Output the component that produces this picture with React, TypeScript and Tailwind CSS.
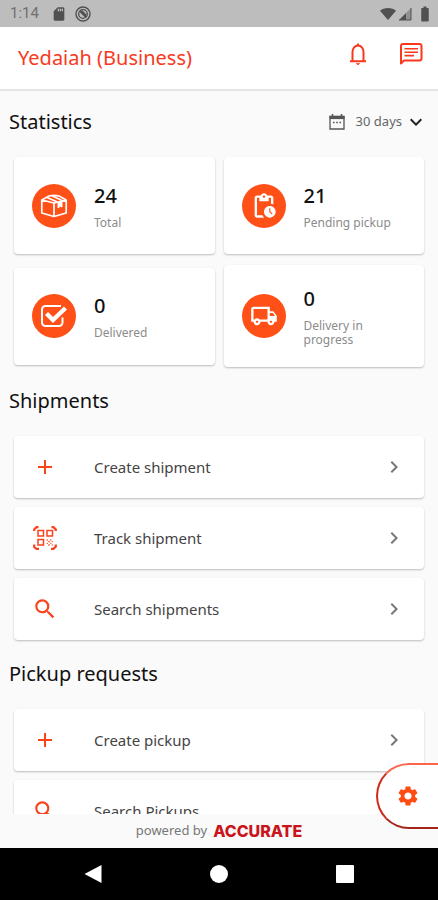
import type { ReactNode } from "react";
import {
  MdAdd,
  MdBatteryFull,
  MdChevronRight,
  MdKeyboardArrowDown,
  MdOutlineLocalShipping,
  MdOutlinePendingActions,
  MdSdCard,
  MdSearch,
  MdSettings,
} from "react-icons/md";

function BoxIcon() {
  return (
    <svg className="size-7" viewBox="0 0 28 28" fill="none" stroke="white" strokeWidth="1.7" strokeLinejoin="round">
      <path d="M1.8 8 14 11 26.2 8V21L14 24.5 1.8 21Z" />
      <path d="M1.8 8 9 4Q14 2.6 19 4L26.2 8M14 11V24" />
      <path d="M7 5.5 17 9.8M12 3.8 22 8.5" />
      <path d="M18 10.5V16L20.2 14.2 22 15V9.5Z" fill="white" strokeWidth="1" />
    </svg>
  );
}

function CheckIcon() {
  return (
    <svg className="size-7" viewBox="0 0 28 28" fill="none" stroke="white">
      <path d="M21 4H5.5a3.5 3.5 0 0 0-3.5 3.5v13a3.5 3.5 0 0 0 3.5 3.5h13.5a3.5 3.5 0 0 0 3.5-3.5v-5" strokeWidth="2" />
      <path d="m6.5 11.5 6.500 6.500L25.500 6" strokeWidth="4.4" />
    </svg>
  );
}

function QrIcon() {
  return (
    <svg className="size-6" viewBox="0 0 24 24" fill="none" stroke="currentColor">
      <path d="M1.2 5V3.5L3.5 1.2H5.500M18.500 1.200H20.500L22.800 3.500V5M1.200 18.500V21L3.500 22.800H6M18 22.800H20.500L22.800 20.500V18.500" strokeWidth="2.2" />
      <path d="M5 4.500h5.500v5.500H5zM14 4.500h5.500v5.500H14zM5 13.500h5.500V19H5z" strokeWidth="1.5" />
      <path d="M13.500 14h1.500M17 14h1.500M15 15.700h2M18.700 15.700h1.300M13.500 17.300h1.500M17 17.300h1.500M15 19h2M18.700 19h1.300" strokeWidth="1.3" opacity="0.7" />
    </svg>
  );
}

function BellIcon() {
  return (
    <svg className="h-6 w-5" viewBox="0 0 20 24" fill="none" stroke="currentColor" strokeWidth="2">
      <path d="M4.5 19V10a5.500 6.500 0 0 1 11 0v9" />
      <path d="M2 19.3h16M10 3.5V1.5" />
      <path d="M8.3 21.5h3.4l-1.700 1.400z" fill="currentColor" strokeWidth="0.6" />
    </svg>
  );
}

function ChatIcon() {
  return (
    <svg className="size-6" viewBox="0 0 24 24" fill="none" stroke="currentColor">
      <path d="M2 21.5V4a2 2 0 0 1 2-2h16.500a2 2 0 0 1 2 2v12.500a2 2 0 0 1-2 2H5z" strokeWidth="2" strokeLinejoin="round" />
      <path d="M5.5 6.8h13.5M5.5 10.2h13.5M5.5 13.6h9.5" strokeWidth="1.6" />
    </svg>
  );
}

function CalendarIcon() {
  return (
    <svg className="size-[18px] text-[#555]" viewBox="0 0 18 18" fill="none" stroke="currentColor">
      <path d="M2 3.5h14V16H2z" strokeWidth="1.3" />
      <path d="M1.5 4.5h15" strokeWidth="3.2" />
      <path d="M4.5 1v3M13.5 1v3" strokeWidth="1.5" />
      <path d="M5 9.5h1.6M8.2 9.5h1.6M11.4 9.5H13" strokeWidth="1.5" />
    </svg>
  );
}

const stats = [
  { value: 24, label: "Total", icon: <BoxIcon /> },
  { value: 21, label: "Pending pickup", icon: <MdOutlinePendingActions className="size-7" /> },
  { value: 0, label: "Delivered", icon: <CheckIcon /> },
  { value: 0, label: "Delivery in progress", icon: <MdOutlineLocalShipping className="size-7" /> },
];

function StatCard({ value, label, icon }: { value: number; label: string; icon: ReactNode }) {
  return (
    <div className="flex min-h-[97px] items-center rounded-sm bg-white py-5 pr-4 pl-[18px] shadow-[0_1px_2px_rgba(0,0,0,0.25)]">
      <div className="flex size-11 shrink-0 items-center justify-center rounded-full bg-[#ff5018] text-white">
        {icon}
      </div>
      <div className="ml-[18px] max-w-[88px]">
        <p className="text-xl leading-7 font-medium text-[#111]">{value}</p>
        <p className="mt-1.5 text-xs leading-[14px] text-[#8b8b8b]">{label}</p>
      </div>
    </div>
  );
}

function ActionRow({ label, icon }: { label: string; icon: ReactNode }) {
  return (
    <button
      type="button"
      className="flex h-[62px] w-full items-center rounded-sm bg-white px-[18px] text-left shadow-[0_1px_2px_rgba(0,0,0,0.25)]"
    >
      <span className="flex w-[26px] justify-center text-[#f9431b]">{icon}</span>
      <span className="ml-9 flex-1 text-[15px] text-[#444]">{label}</span>
      <MdChevronRight className="size-6 text-[#777]" />
    </button>
  );
}

export default function App() {
  return (
    <div className="relative flex h-screen flex-col bg-[#fafafa] font-['Noto_Sans',sans-serif]">
      {/* Status bar */}
      <div className="flex h-[27px] shrink-0 items-center bg-[#bdbdbd] pr-1 pl-2.5 text-[#505050]">
        <span className="font-[Roboto,sans-serif] text-[15px] text-[#707070]">1:14</span>
        <MdSdCard className="ml-3 size-4" />
        <svg className="ml-2 size-4" viewBox="0 0 16 16" fill="none" stroke="currentColor">
          <circle cx="8" cy="8" r="7" strokeWidth="1.4" />
          <circle cx="8" cy="8" r="4.3" strokeWidth="1.3" />
          <path d="m5 5 6 6M6.5 5l4.5 4.5" strokeWidth="1.8" />
        </svg>
        <svg className="ml-auto h-4 w-8" viewBox="0 0 32 16" fill="currentColor">
          <path d="M0 4.8C4 1.2 12 1.2 16 4.8L8 14z" />
          <path d="M19 14 31 2V14z" opacity="0.4" />
          <path d="M19 14 26 7.2V14z" />
          <path d="M31 2V14H19" fill="none" stroke="currentColor" strokeWidth="1" />
        </svg>
        <MdBatteryFull className="ml-1 size-[18px]" />
      </div>

      {/* Header */}
      <header className="flex h-16 shrink-0 items-center border-b-2 border-[#e4e4e4] bg-white pr-[15px] pl-[18px] text-[#f9391d]">
        <h1 className="flex-1 text-xl">Yedaiah (Business)</h1>
        <button type="button" aria-label="Notifications" className="mb-2">
          <BellIcon />
        </button>
        <button type="button" aria-label="Messages" className="mb-2 ml-[31px]">
          <ChatIcon />
        </button>
      </header>

      <main className="min-h-0 flex-1 overflow-y-auto [scrollbar-width:none]">
        <div className="flex h-[62px] items-center pr-2.5 pl-[9px]">
          <h2 className="flex-1 text-xl text-[#111]">Statistics</h2>
          <button type="button" className="flex items-center text-[13px] text-[#666]">
            <CalendarIcon />
            <span className="ml-2.5">30 days</span>
            <MdKeyboardArrowDown className="ml-0.5 size-6 text-[#222]" />
          </button>
        </div>

        <div className="grid grid-cols-2 items-center gap-x-[9px] gap-y-[11px] px-3.5 pt-1">
          {stats.map((s) => (
            <StatCard key={s.label} {...s} />
          ))}
        </div>

        <h2 className="mt-5 pl-[9px] text-xl text-[#111]">Shipments</h2>
        <div className="mt-[21px] flex flex-col gap-[9px] px-3.5">
          <ActionRow label="Create shipment" icon={<MdAdd className="size-6" />} />
          <ActionRow label="Track shipment" icon={<QrIcon />} />
          <ActionRow label="Search shipments" icon={<MdSearch className="size-[26px]" />} />
        </div>

        <h2 className="mt-5 pl-[9px] text-xl text-[#111]">Pickup requests</h2>
        <div className="mt-[21px] flex flex-col gap-[9px] px-3.5 pb-4">
          <ActionRow label="Create pickup" icon={<MdAdd className="size-6" />} />
          <ActionRow label="Search Pickups" icon={<MdSearch className="size-[26px]" />} />
        </div>
      </main>

      <footer className="flex h-[34px] shrink-0 items-center justify-center gap-1.5 text-[13px] text-[#777]">
        powered by
        <span className="font-[Inter,sans-serif] text-base font-extrabold text-[#c9151b]">ACCURATE</span>
      </footer>

      {/* Floating settings tab */}
      <button
        type="button"
        aria-label="Settings"
        className="absolute right-0 bottom-[71px] flex h-[66px] w-[62px] items-center rounded-l-full border-2 border-r-0 border-t-[#f9664c] border-b-[#a3261b] border-l-[#cf2b1c] bg-white pl-[18px] text-[#ff4a12]"
      >
        <MdSettings className="size-6" />
      </button>

      {/* Android navigation */}
      <nav className="flex h-[52px] shrink-0 items-center justify-center gap-[108px] bg-black text-white">
        <button type="button" aria-label="Back">
          <svg className="size-[18px]" viewBox="0 0 18 18" fill="currentColor">
            <path d="M17.5 0V18L0.5 9z" />
          </svg>
        </button>
        <button type="button" aria-label="Home" className="size-[18px] rounded-full bg-white" />
        <button type="button" aria-label="Recents" className="size-[18px] rounded-[1px] bg-white" />
      </nav>
    </div>
  );
}
